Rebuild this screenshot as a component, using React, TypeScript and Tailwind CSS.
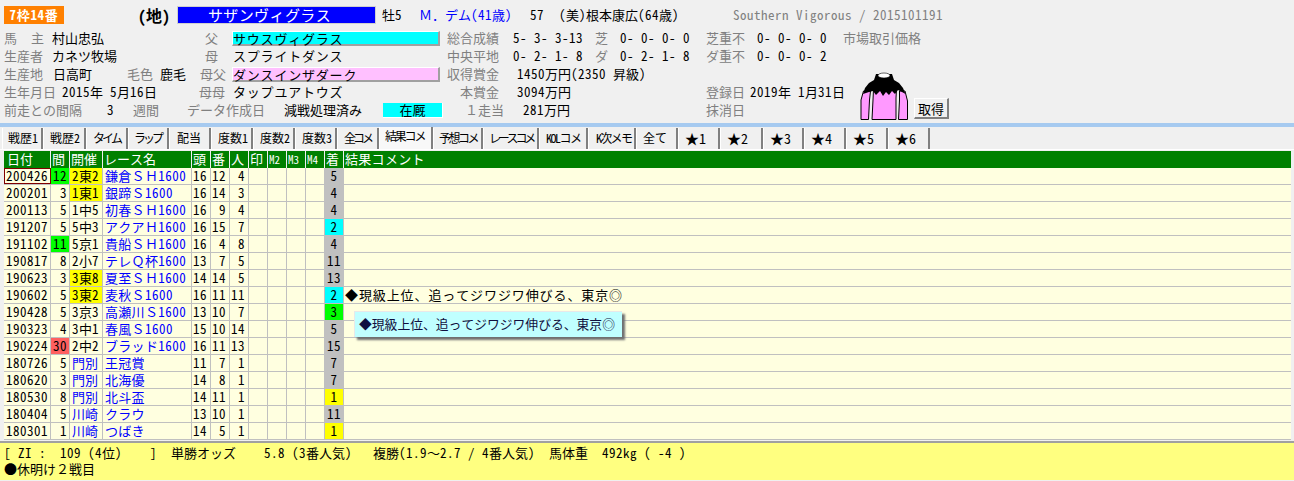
import React from "react";

const FONT = '"Noto Sans Mono CJK JP","Noto Sans CJK JP",sans-serif';

function J({ t }: { t: string }) {
  const parts = t.split(/([\x20-\x7e]+)/).filter(Boolean);
  return (
    <>
      {parts.map((p, i) =>
        /^[\x20-\x7e]+$/.test(p) ? (
          <span key={i} className="tracking-[0.5px]">{p}</span>
        ) : (
          <span key={i}>{p}</span>
        )
      )}
    </>
  );
}

function C({ w, t, c = "" }: { w: string; t?: string; c?: string }) {
  return (
    <span className={`${w} shrink-0 whitespace-pre leading-[18px] ${c}`}>
      {t ? <J t={t} /> : null}
    </span>
  );
}

const L = "text-[#808080]";

function Bar({ t, c }: { t: string; c: string }) {
  return (
    <span className={`w-[208px] h-[15px] shrink-0 border-t border-l border-white border-r-2 border-b-2 border-r-[#a0a0a0] border-b-[#a0a0a0] leading-[13px] whitespace-pre tracking-[0.8px] ${c}`}>
      {t}
    </span>
  );
}

function Row({ children }: { children: React.ReactNode }) {
  return <div className="flex items-center h-[18px] pl-[4px]">{children}</div>;
}

const tabs: [string, number, string][] = [
  ["戦歴1", 41, "pl-[5px] text-[12px]"],
  ["戦歴2", 43, "pl-[6px] text-[12px]"],
  ["タイム", 42, "pl-[6px] text-[12px] tracking-[-3px]"],
  ["ラップ", 41, "pl-[5px] text-[12px] tracking-[-3px]"],
  ["配当", 42, "pl-[7px] text-[12px]"],
  ["度数1", 42, "pl-[6px] text-[12px]"],
  ["度数2", 42, "pl-[6px] text-[12px]"],
  ["度数3", 42, "pl-[6px] text-[12px]"],
  ["全コメ", 42, "pl-[6px] text-[12px] tracking-[-3px]"],
  ["結果コメ", 54, "pl-[5px] text-[12px] tracking-[-2.2px]"],
  ["予想コメ", 50, "pl-[5px] text-[12px] tracking-[-2.5px]"],
  ["レースコメ", 56, "pl-[5px] text-[12px] tracking-[-3.2px]"],
  ["KOLコメ", 49, "pl-[6px] text-[12px] tracking-[-1.5px]"],
  ["K次メモ", 48, "pl-[7px] text-[12px] tracking-[-1.7px]"],
  ["全て", 42, "pl-[6px] text-[12px]"],
  ["★1", 42, "pl-[6px] text-[14px]"],
  ["★2", 43, "pl-[6px] text-[14px]"],
  ["★3", 41, "pl-[6px] text-[14px]"],
  ["★4", 42, "pl-[6px] text-[14px]"],
  ["★5", 42, "pl-[6px] text-[14px]"],
  ["★6", 42, "pl-[6px] text-[14px]"],
];

const widths = ["w-[47px]", "w-[19px]", "w-[33px]", "w-[89px]", "w-[19px]", "w-[19px]", "w-[19px]", "w-[19px]", "w-[19px]", "w-[19px]", "w-[19px]", "w-[19px]", "flex-1"];
const heads = ["日付", "間", "開催", "レース名", "頭", "番", "人", "印", "M2", "M3", "M4", "着", "結果コメント"];

type R = [string, string, string, string, string, string, string, string, string, string, string, string];
const rows: R[] = [
  ["200426", "12", "g", "2東2", "y", "鎌倉ＳＨ1600", "16", "12", "4", "5", "", ""],
  ["200201", "3", "", "1東1", "y", "銀蹄Ｓ1600", "16", "14", "3", "4", "", ""],
  ["200113", "5", "", "1中5", "", "初春ＳＨ1600", "16", "9", "4", "4", "", ""],
  ["191207", "5", "", "5中3", "", "アクアＨ1600", "16", "15", "7", "2", "c", ""],
  ["191102", "11", "g", "5京1", "", "貴船ＳＨ1600", "16", "4", "8", "4", "", ""],
  ["190817", "8", "", "2小7", "", "テレＱ杯1600", "13", "7", "5", "11", "", ""],
  ["190623", "3", "", "3東8", "y", "夏至ＳＨ1600", "14", "14", "5", "13", "", ""],
  ["190602", "5", "", "3東2", "y", "麦秋Ｓ1600", "16", "11", "11", "2", "c", "◆現級上位、追ってジワジワ伸びる、東京◎"],
  ["190428", "5", "", "3京3", "", "高瀬川Ｓ1600", "13", "10", "7", "3", "g", ""],
  ["190323", "4", "", "3中1", "", "春風Ｓ1600", "15", "10", "14", "5", "", ""],
  ["190224", "30", "r", "2中2", "", "ブラッド1600", "16", "11", "13", "15", "", ""],
  ["180726", "5", "", "門別", "b", "王冠賞", "11", "7", "1", "7", "", ""],
  ["180620", "3", "", "門別", "b", "北海優", "14", "8", "1", "7", "", ""],
  ["180530", "8", "", "門別", "b", "北斗盃", "14", "11", "1", "1", "y", ""],
  ["180404", "5", "", "川崎", "b", "クラウ", "13", "10", "1", "11", "", ""],
  ["180301", "1", "", "川崎", "b", "つばき", "14", "5", "1", "1", "y", ""],
];

const GAP: Record<string, string> = { g: "bg-[#00ff00]", r: "bg-[#ff6060]", "": "" };
const FIN: Record<string, string> = { "": "bg-[#c0c0c0]", c: "bg-[#00ffff]", g: "bg-[#00ff00]", y: "bg-[#ffff00]" };

function Cell({ i, t, c = "" }: { i: number; t?: string; c?: string }) {
  return (
    <div className={`${widths[i]} shrink-0 h-full border-r border-[#c0c0c0] whitespace-pre leading-[16px] ${c}`}>
      {t ? <J t={t} /> : null}
    </div>
  );
}

function Silks() {
  return (
    <svg width="50" height="50" viewBox="0 0 50 50" className="shrink-0">
      <path d="M1 48.5 L1 29 L3.5 20 L10.5 20 L9.5 29 L8.5 48.5 Z" fill="#ff99ff" stroke="#000" strokeWidth="1" />
      <path d="M47.5 48.5 L47.5 30 L45 20 L39.5 20 L39.5 29 L38.5 48.5 Z" fill="#ff99ff" stroke="#000" strokeWidth="1" />
      <path d="M12 48.5 L13 29 L13.5 18 L36.5 18 L36 27 L36 48.5 Z" fill="#ff99ff" stroke="#000" strokeWidth="1" />
      <path d="M16 3 L32 3 L34 9 L39 12 L43 17 L45.5 23 L42 21 L38 19 L35 23 L32 20 L29 24 L26 21 L23 25 L20 20 L16 24 L13 20 L9 21 L3 23 L5 17 L9 12 L14 9 Z" fill="#000" />
      <ellipse cx="24" cy="4.5" rx="6" ry="2.5" fill="#fff" stroke="#000" strokeWidth="0.6" />
    </svg>
  );
}

export default function App() {
  return (
    <div className="relative w-[1294px] h-[481px] overflow-hidden bg-[#f0f0f0] text-[13px] text-black" style={{ fontFamily: FONT }}>
      <div className="flex items-center h-[29px] pl-[4px]">
        <span className="w-[60px] h-[18px] shrink-0 bg-[#ff8000] text-white font-bold text-[13px] leading-[18px] text-center tracking-[0.7px]">7枠14番</span>
        <span className="ml-[74px] w-[39px] shrink-0 font-bold text-[16px] whitespace-pre">(地)</span>
        <span className="w-[199px] h-[18px] shrink-0 bg-[#0000ff] border border-[#d0d0d0] text-white text-[15px] leading-[15px] text-center tracking-[0.4px] pr-[14px]">サザンヴィグラス</span>
        <C w="ml-[6px] w-[37px]" t="牡5" />
        <C w="w-[111px]" t="Ｍ．デム(41歳)" c="text-[#0000ff]" />
        <C w="w-[29px]" t="57" />
        <C w="w-[174px]" t="(美)根本康広(64歳)" />
        <C w="w-[220px]" t="Southern Vigorous / 2015101191" c={L} />
      </div>

      <Row>
        <C w="w-[48px]" t="馬  主" c={L} />
        <C w="w-[153px]" t="村山忠弘" />
        <C w="w-[27px]" t="父" c={L} />
        <Bar t="サウスヴィグラス" c="bg-[#00ffff]" />
        <C w="ml-[7px] w-[66px]" t="総合成績" c={L} />
        <C w="w-[82px]" t="5- 3- 3-13" />
        <C w="w-[25px]" t="芝" c={L} />
        <C w="w-[86px]" t="0- 0- 0- 0" />
        <C w="w-[51px]" t="芝重不" c={L} />
        <C w="w-[86px]" t="0- 0- 0- 0" />
        <C w="w-[90px]" t="市場取引価格" c={L} />
      </Row>
      <Row>
        <C w="w-[48px]" t="生産者" c={L} />
        <C w="w-[153px]" t="カネツ牧場" />
        <C w="w-[27px]" t="母" c={L} />
        <span className="w-[208px] shrink-0 pl-[1px] whitespace-pre tracking-[0.8px]">スプライトダンス</span>
        <C w="ml-[7px] w-[66px]" t="中央平地" c={L} />
        <C w="w-[82px]" t="0- 2- 1- 8" />
        <C w="w-[25px]" t="ダ" c={L} />
        <C w="w-[86px]" t="0- 2- 1- 8" />
        <C w="w-[51px]" t="ダ重不" c={L} />
        <C w="w-[86px]" t="0- 0- 0- 2" />
      </Row>
      <Row>
        <C w="w-[49px]" t="生産地" c={L} />
        <C w="w-[74px]" t="日高町" />
        <C w="w-[33px]" t="毛色" c={L} />
        <C w="w-[40px]" t="鹿毛" />
        <C w="w-[32px]" t="母父" c={L} />
        <Bar t="ダンスインザダーク" c="bg-[#ffc0ff]" />
        <C w="ml-[7px] w-[70px]" t="収得賞金" c={L} />
        <C w="w-[200px]" t="1450万円(2350 昇級)" />
      </Row>
      <Row>
        <C w="w-[58px]" t="生年月日" c={L} />
        <C w="w-[137px]" t="2015年 5月16日" />
        <C w="w-[33px]" t="母母" c={L} />
        <span className="w-[208px] shrink-0 pl-[1px] whitespace-pre tracking-[0.8px]">タップユアトウズ</span>
        <C w="ml-[20px] w-[57px]" t="本賞金" c={L} />
        <C w="w-[189px]" t="3094万円" />
        <C w="w-[44px]" t="登録日" c={L} />
        <C w="w-[110px]" t="2019年 1月31日" />
      </Row>
      <Row>
        <C w="w-[103px]" t="前走との間隔" c={L} />
        <C w="w-[26px]" t="3" />
        <C w="w-[54px]" t="週間" c={L} />
        <C w="w-[97px]" t="データ作成日" c={L} />
        <C w="w-[99px]" t="減戦処理済み" />
        <span className="w-[60px] h-[15px] shrink-0 bg-[#00ffff] border-r border-b border-white leading-[14px] text-center">在厩</span>
        <C w="ml-[22px] w-[52px]" t="１走当" c={L} />
        <C w="w-[189px] pl-[6px]" t="281万円" />
        <C w="w-[80px]" t="抹消日" c={L} />
      </Row>

      <div className="absolute left-[860px] top-[71px]"><Silks /></div>
      <button className="absolute left-[914px] top-[98px] w-[35px] h-[21px] bg-[#f0f0f0] border-t border-l border-white border-r-2 border-b-2 border-r-[#808080] border-b-[#808080] text-[13px] leading-[17px]">取得</button>

      <div className="h-[4px] mt-[4px] bg-[#a6caf0]" />

      <div className="flex items-end h-[23px] pl-[2px] border-b border-white">
        {tabs.map(([t, w, c]) => {
          const sel = t === "結果コメ";
          return (
            <div
              key={t}
              className={`shrink-0 whitespace-pre border-r-2 border-r-[#808080] border-l border-l-white ${c} ${sel ? "h-[22px] bg-[#f8f8f8] leading-[18px]" : "h-[21px] bg-[#f0f0f0] leading-[20px]"}`}
              style={{ width: w }}
            >
              {t}
            </div>
          );
        })}
      </div>

      <div className="mt-[1px] ml-[4px] mr-[3px]">
        <div className="flex h-[17px] bg-[#008000] text-white">
          {heads.map((h, i) => (
            <div key={h} className={`${widths[i]} shrink-0 border-r border-[#f0f0f0] whitespace-pre leading-[16px] pl-[1px] ${i >= 8 && i <= 10 ? "text-[11px]" : ""} ${i === 12 ? "tracking-[0.3px] border-r-0" : ""} ${i === 0 ? "pl-[3px]" : ""}`}>
              {h}
            </div>
          ))}
        </div>
        {rows.map((r, idx) => (
          <div key={r[0]} className="flex h-[17px] bg-[#ffffe0] border-b border-[#c0c0c0]">
            <Cell i={0} t={r[0]} c={`pl-[2px] ${idx === 0 ? "outline outline-1 -outline-offset-1 outline-[#800000]" : ""}`} />
            <Cell i={1} t={r[1]} c={`text-right pr-[2px] ${GAP[r[2]]}`} />
            <Cell i={2} t={r[3]} c={`pl-[2px] ${r[4] === "y" ? "bg-[#ffff00]" : ""} ${r[4] === "b" ? "text-[#0000ff]" : ""}`} />
            <Cell i={3} t={r[5]} c="pl-[2px] text-[#0000ff] tracking-[0.3px]" />
            <Cell i={4} t={r[6]} c="pl-[1px]" />
            <Cell i={5} t={r[7]} c="text-right pr-[3px]" />
            <Cell i={6} t={r[8]} c="text-right pr-[3px]" />
            <Cell i={7} />
            <Cell i={8} />
            <Cell i={9} />
            <Cell i={10} />
            <Cell i={11} t={r[9]} c={`text-center ${FIN[r[10]]}`} />
            <Cell i={12} t={r[11]} c="pl-[1px] border-r-0 tracking-[0.9px]" />
          </div>
        ))}
      </div>

      <div className="absolute left-[354px] top-[311px] w-[268px] h-[26px] bg-[#c0ffff] border-t border-l border-[#e8e8e8] shadow-[3px_3px_2px_#707070] leading-[24px] pl-[4px] whitespace-pre text-[12.8px] text-[#101040]">
        ◆現級上位、追ってジワジワ伸びる、東京◎
      </div>

      <div className="mt-[1px] h-[39px] border-t-2 border-[#a0a0a0] bg-[#ffff80] pl-[4px] pt-[1px]">
        <div className="whitespace-pre leading-[17px]">
          <J t="[ ZI :  109 (4位)    ]  単勝オッズ    5.8 (3番人気)   複勝(1.9〜2.7 / 4番人気)  馬体重  492kg ( -4 )" />
        </div>
        <div className="whitespace-pre leading-[16px]">●休明け２戦目</div>
      </div>
    </div>
  );
}
